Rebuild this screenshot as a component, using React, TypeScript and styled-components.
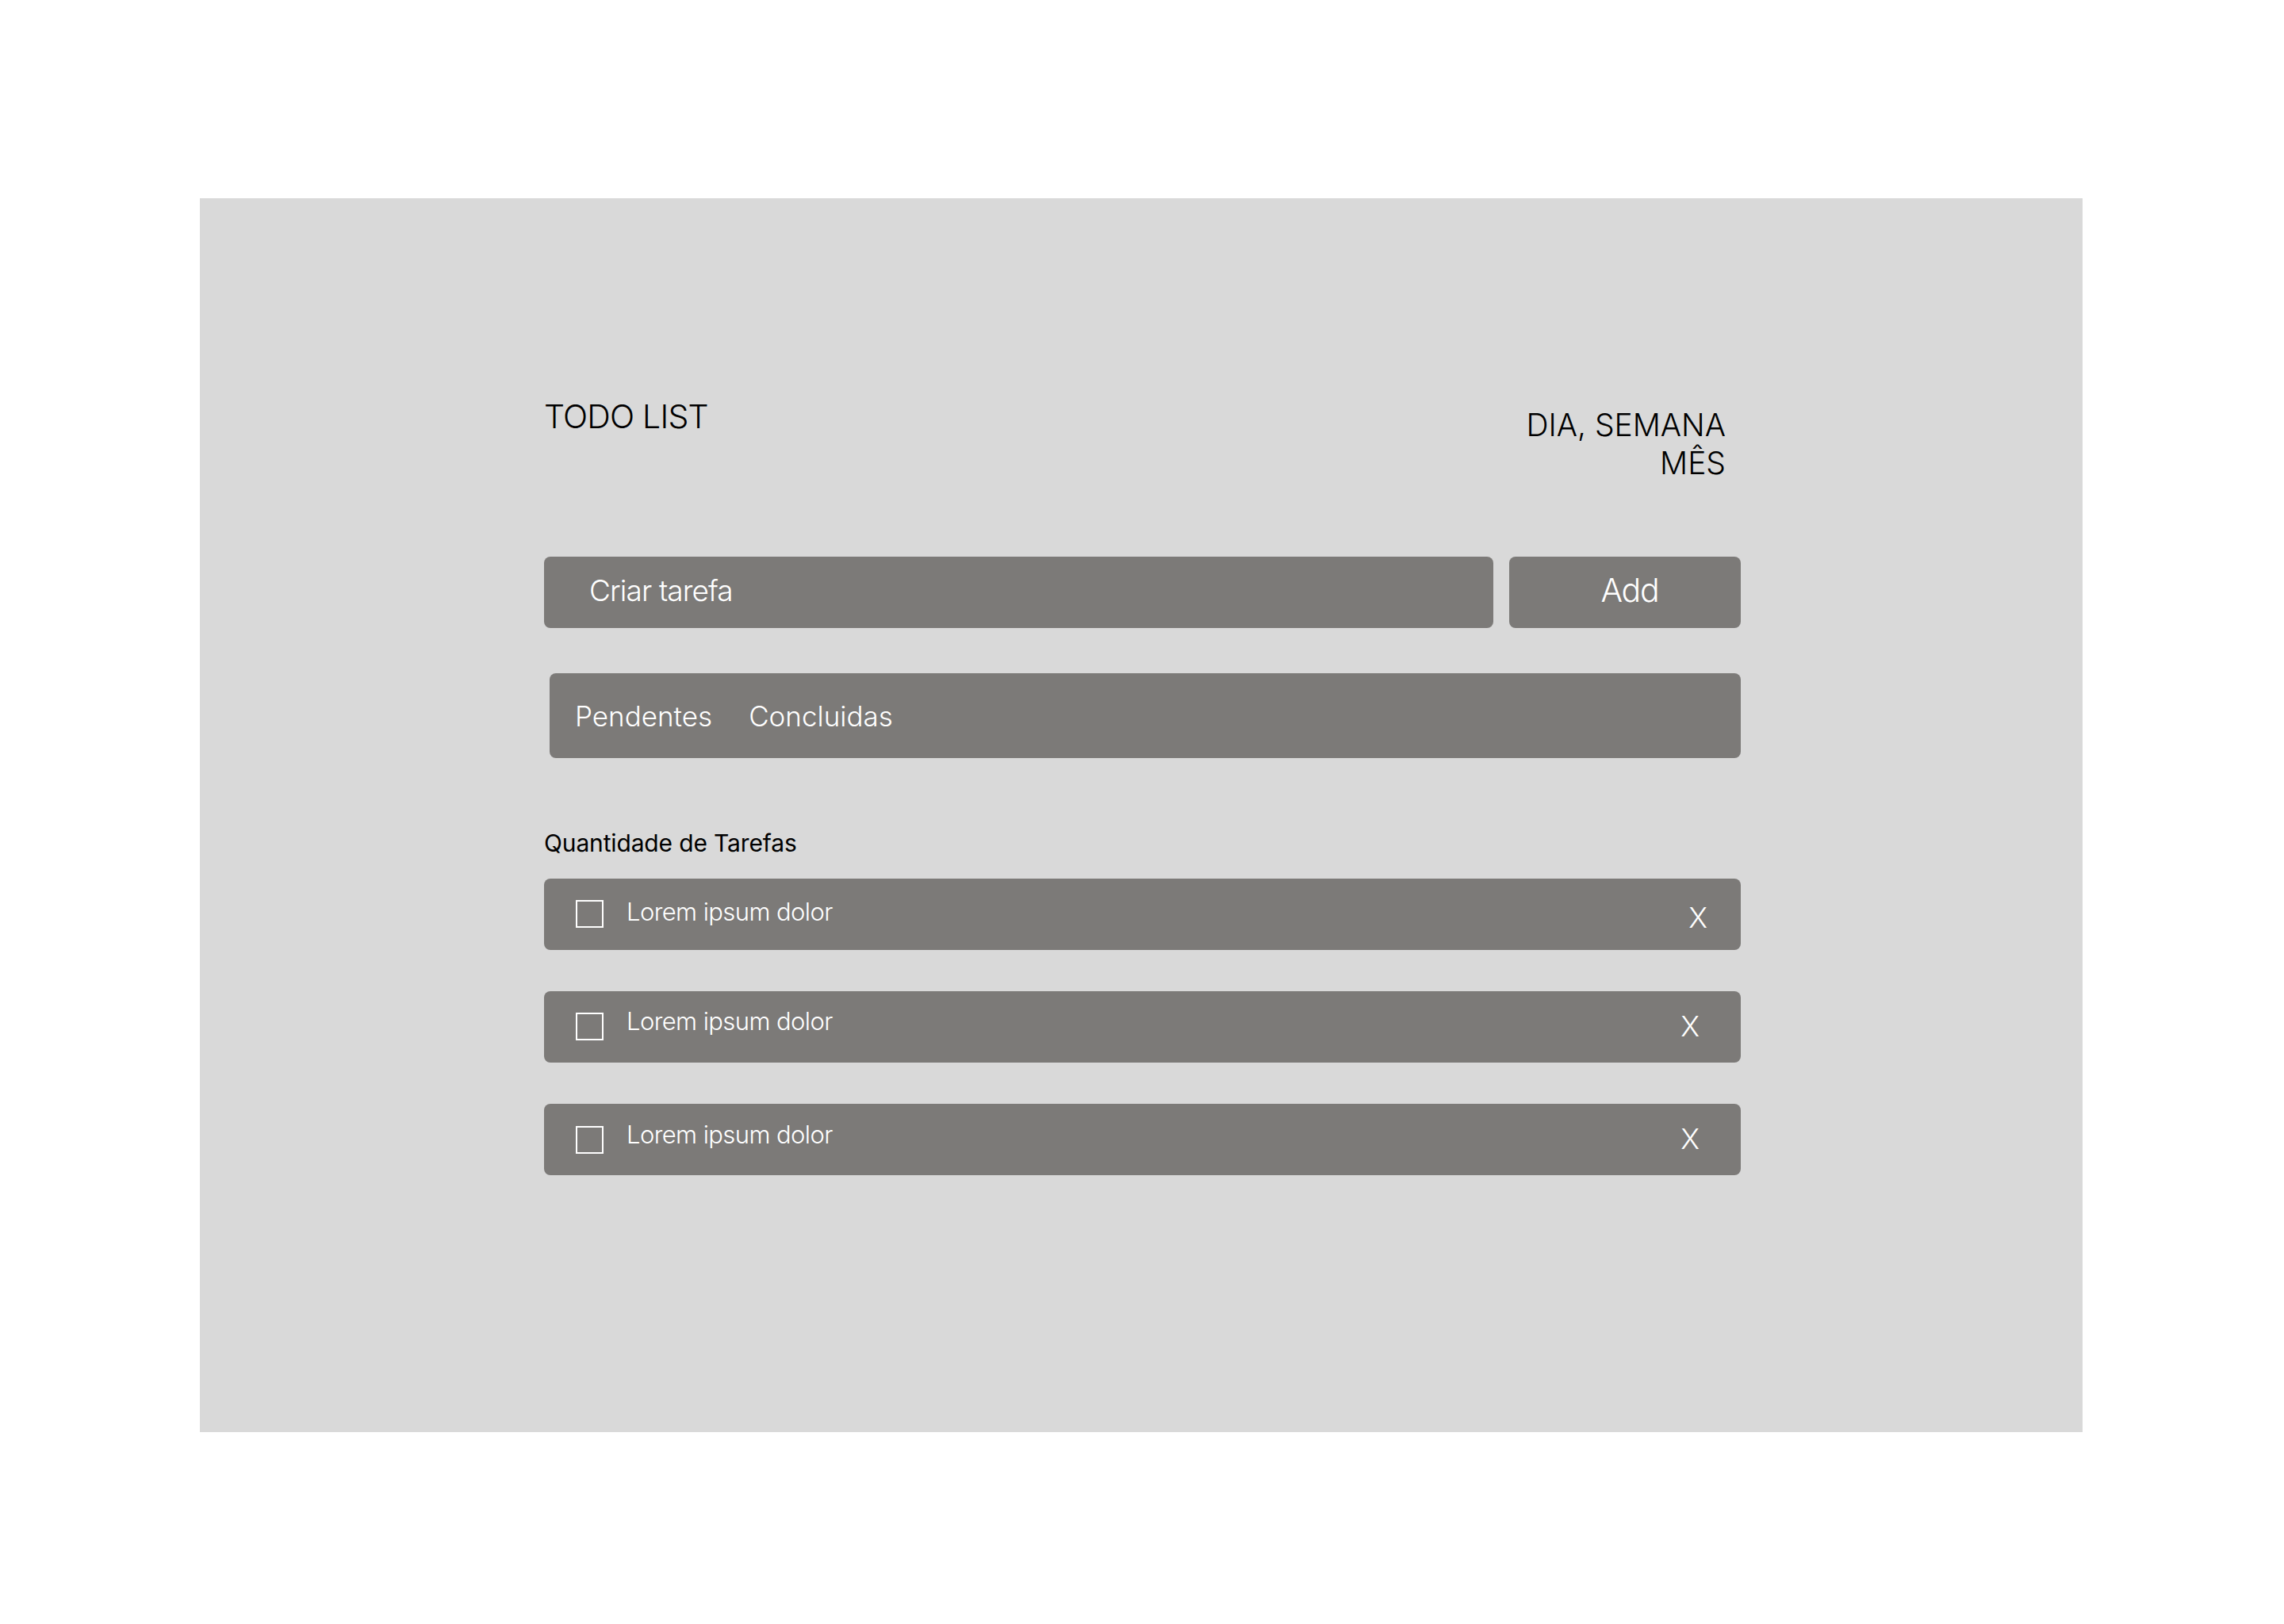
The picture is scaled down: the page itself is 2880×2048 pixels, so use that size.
import React from "react";
import styled, { createGlobalStyle } from "styled-components";

const GlobalStyle = createGlobalStyle`
  html, body {
    margin: 0;
    padding: 0;
    background: #ffffff;
  }
  body {
    font-family: Inter, "Noto Sans", "Liberation Sans", sans-serif;
  }
  * { box-sizing: border-box; }
`;

const Page = styled.div`
  width: 2880px;
  height: 2048px;
  padding: 250px 0 0 252px;
  background: #ffffff;
`;

const Panel = styled.main`
  width: 2374px;
  height: 1556px;
  background: #d9d9d9;
  padding: 254.6px 0 0 434px;
`;

const Column = styled.div`
  width: 1509px;
  display: flex;
  flex-direction: column;
`;

const Header = styled.header`
  display: flex;
  justify-content: space-between;
  align-items: flex-start;
  padding-right: 19px;
  margin-bottom: 94px;
`;

const Title = styled.h1`
  margin: 0;
  font-size: 41px;
  line-height: 1;
  font-weight: 300;
  color: #000;
  letter-spacing: -0.8px;
`;

const Periods = styled.div`
  margin-top: 7px;
  font-size: 39px;
  line-height: 48px;
  font-weight: 300;
  color: #000;
  text-align: right;
`;

const CreateRow = styled.form`
  display: flex;
  gap: 20px;
  height: 90px;
  margin-bottom: 57px;
`;

const TaskInput = styled.div`
  flex: 0 0 1197px;
  background: #7c7a78;
  border-radius: 8px;
  display: flex;
  align-items: center;
  padding: 0 0 4px 57px;
  font-size: 37px;
  line-height: 1;
  font-weight: 300;
  letter-spacing: -0.9px;
  color: #ffffff;
`;

const AddButton = styled.button`
  flex: 1;
  background: #7c7a78;
  border: none;
  border-radius: 8px;
  color: #ffffff;
  font-family: inherit;
  font-size: 41px;
  line-height: 1;
  font-weight: 300;
  letter-spacing: -1.2px;
  padding: 0 0 4px 12px;
  cursor: pointer;
`;

const TabBar = styled.nav`
  margin-left: 7px;
  height: 107.4px;
  background: #7c7a78;
  border-radius: 8px;
  display: flex;
  align-items: center;
  gap: 46px;
  padding-left: 32px;
  margin-bottom: 92px;
`;

const Tab = styled.span`
  font-size: 35px;
  line-height: 1;
  font-weight: 300;
  color: #ffffff;
  transform: translateY(1px);
`;

const CountLabel = styled.div`
  font-size: 30px;
  line-height: 1;
  font-weight: 400;
  letter-spacing: -0.15px;
  color: #000;
  margin-bottom: 30px;
`;

const TaskList = styled.ul`
  list-style: none;
  margin: 0;
  padding: 0;
  display: flex;
  flex-direction: column;
  gap: 52.6px;
`;

const TaskRow = styled.li`
  height: 89.6px;
  background: #7c7a78;
  border-radius: 8px;
  display: flex;
  align-items: center;
  padding: 0 0 0 40px;
`;

const CheckBox = styled.span`
  flex: 0 0 35px;
  width: 35px;
  height: 35px;
  border: 2.5px solid #ffffff;
  margin-right: 29px;
`;

const TaskText = styled.span<{ $lift: number }>`
  flex: 1;
  font-size: 31px;
  line-height: 1;
  font-weight: 300;
  letter-spacing: -0.6px;
  color: #ffffff;
  transform: translateY(${(p) => -p.$lift}px);
`;

const RemoveX = styled.span<{ $right: number; $drop: number }>`
  font-size: 36px;
  line-height: 1;
  font-weight: 300;
  color: #ffffff;
  margin-right: ${(p) => p.$right}px;
  transform: translateY(${(p) => p.$drop}px);
`;

const tasks = [
  { id: 1, text: "Lorem ipsum dolor", lift: 3, right: 42, drop: 4 },
  { id: 2, text: "Lorem ipsum dolor", lift: 7.5, right: 52, drop: -1 },
  { id: 3, text: "Lorem ipsum dolor", lift: 7.5, right: 52, drop: -1 },
];

export default function App() {
  return (
    <>
      <GlobalStyle />
      <Page>
        <Panel>
          <Column>
            <Header>
              <Title>TODO LIST</Title>
              <Periods>
                DIA, SEMANA
                <br />
                MÊS
              </Periods>
            </Header>
            <CreateRow onSubmit={(e) => e.preventDefault()}>
              <TaskInput>Criar tarefa</TaskInput>
              <AddButton type="submit">Add</AddButton>
            </CreateRow>
            <TabBar>
              <Tab>Pendentes</Tab>
              <Tab>Concluidas</Tab>
            </TabBar>
            <CountLabel>Quantidade de Tarefas</CountLabel>
            <TaskList>
              {tasks.map((t) => (
                <TaskRow key={t.id}>
                  <CheckBox />
                  <TaskText $lift={t.lift}>{t.text}</TaskText>
                  <RemoveX $right={t.right} $drop={t.drop}>
                    X
                  </RemoveX>
                </TaskRow>
              ))}
            </TaskList>
          </Column>
        </Panel>
      </Page>
    </>
  );
}
